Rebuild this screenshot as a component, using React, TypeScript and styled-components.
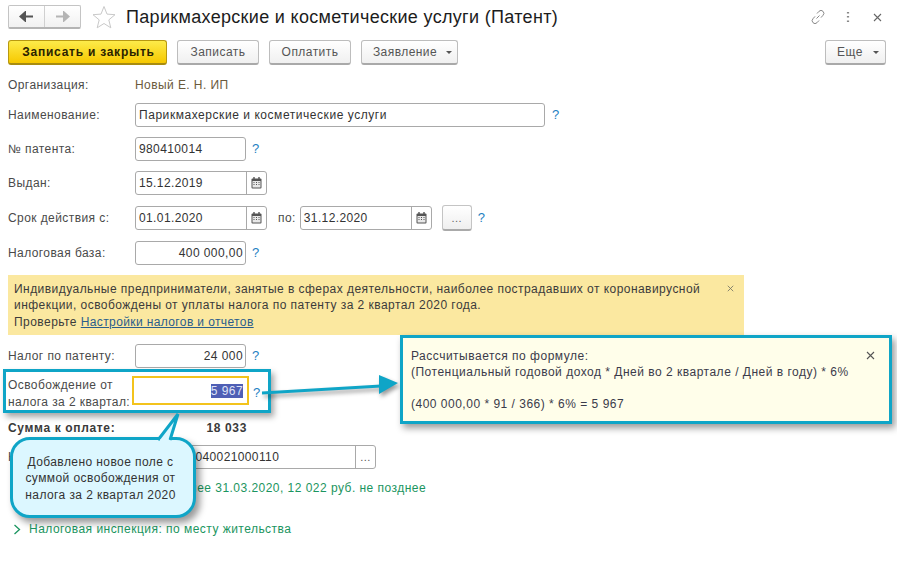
import React from "react";
import styled, { createGlobalStyle } from "styled-components";

const Global = createGlobalStyle`
  html, body { margin: 0; padding: 0; background: #fff; }
  body { font-family: "Liberation Sans", Arial, sans-serif; font-size: 12px; letter-spacing: .42px; color: #4a4a4a; }
`;
const Page = styled.div`
  position: relative; width: 897px; height: 564px; overflow: hidden; background: #fff;
  padding: 5px 11px 0 8px; box-sizing: border-box;
`;
const TitleBar = styled.div`display: flex; align-items: center; height: 24px;`;
const NavGroup = styled.div`
  display: flex; width: 73px; height: 24px; box-sizing: border-box; border: 1px solid #c4c4c4; border-bottom: 2px solid #b4b4b4; border-radius: 2px;
  background: linear-gradient(#fff, #f1f1f1);
`;
const NavCell = styled.div<{ $divider?: boolean }>`
  flex: 1; display: flex; align-items: center; justify-content: center;
  ${(p) => (p.$divider ? "border-right: 1px solid #d0d0d0;" : "")}
`;
const StarWrap = styled.div`margin-left: 11px; width: 24px; height: 24px; flex: none;`;
const Title = styled.h1`
  margin: 0 0 0 10px; font-weight: 400; font-size: 18px; letter-spacing: .32px; color: #1c1c1c; flex: 1; white-space: nowrap; line-height: 24px;
`;
const WinIcons = styled.div`display: flex; align-items: center; gap: 20px; margin-right: 4px;`;
const CloseWrap = styled.span`display: flex; margin-left: 3px;`;
const Toolbar = styled.div`display: flex; align-items: stretch; gap: 10px; height: 25px; margin-top: 11px;`;
const Button = styled.div<{ $w: number; $primary?: boolean; $push?: boolean; $shift?: number; $gap?: number }>`
  width: ${(p) => p.$w}px; box-sizing: border-box; display: flex; align-items: center; justify-content: center; gap: ${(p) => p.$gap ?? 8}px;
  padding-left: ${(p) => p.$shift ?? 0}px;
  border-radius: 3px; border: 1px solid ${(p) => (p.$primary ? "#b8990f" : "#bdbdbd")}; border-bottom-width: 2px;
  border-bottom-color: ${(p) => (p.$primary ? "#a88c10" : "#a9a9a9")};
  background: ${(p) => (p.$primary ? "linear-gradient(#fdeb4a,#f6c800)" : "linear-gradient(#fff,#f0f0f0)")};
  color: ${(p) => (p.$primary ? "#2a2200" : "#555")}; font-weight: ${(p) => (p.$primary ? 700 : 400)};
  letter-spacing: ${(p) => (p.$primary ? ".75px" : ".45px")};
  ${(p) => (p.$push ? "margin-left: auto;" : "")}
`;
const Caret = styled.span`width: 0; height: 0; border: 3px solid transparent; border-top: 3px solid #555; border-bottom: 0;`;
const Row = styled.div<{ $top: number; $h?: number }>`
  display: flex; align-items: center; margin-top: ${(p) => p.$top}px; height: ${(p) => p.$h ?? 24}px;
`;
const Label = styled.div<{ $w?: number; $bold?: boolean; $pad?: number }>`
  width: ${(p) => p.$w ?? 127}px; flex: none; line-height: 16.5px; font-weight: ${(p) => (p.$bold ? 700 : 400)};
  padding-top: ${(p) => p.$pad ?? 0}px;
  ${(p) => (p.$bold ? "color:#3a3a3a; letter-spacing: .65px;" : "")}
`;
const Value = styled.div`color: #6b5a3c;`;
const Field = styled.div<{ $w: number; $right?: boolean; $ls?: number }>`
  width: ${(p) => p.$w}px; height: 24px; box-sizing: border-box; display: flex; align-items: center; flex: none;
  border: 1px solid #a9a9a9; border-radius: 3px; background: #fff; color: #333; padding: 0 3px;
  ${(p) => (p.$right ? "justify-content: flex-end; padding-right: 2px;" : "")}
  ${(p) => (p.$ls ? `letter-spacing: ${p.$ls}px;` : "")}
  overflow: hidden; white-space: nowrap;
`;
const FieldText = styled.span`flex: 1; white-space: nowrap; letter-spacing: .38px;`;
const FieldBtn = styled.span`
  flex: none; width: 20px; height: 24px; margin-right: -3px; border-left: 1px solid #a9a9a9; display: flex; align-items: center; justify-content: center; color: #555; box-sizing: border-box; font-size: 11px;
`;
const Help = styled.span<{ $left?: number; $pad?: number }>`
  margin-left: ${(p) => p.$left ?? 6}px; color: #1e7fc2; font-size: 13px; font-weight: 400; line-height: 16px;
  padding-top: ${(p) => p.$pad ?? 0}px;
`;
const Sub = styled.span`margin: 0 4px 0 11px; `;
const DotsBtn = styled.div`
  width: 30px; height: 26px; margin-left: 10px; box-sizing: border-box; border: 1px solid #c4c4c4; border-bottom: 2px solid #aaa; border-radius: 3px;
  background: linear-gradient(#fff, #efefef); display: flex; align-items: center; justify-content: center; color: #666; font-size: 11px;
`;
const Banner = styled.div`
  position: relative; margin-top: 10px; width: 736px; height: 60px; box-sizing: border-box; background: #fbe8a0; padding: 6px 6px; line-height: 16.4px; color: #3b3b3b; letter-spacing: .45px;
`;
const BannerClose = styled.span`position: absolute; right: 10px; top: 5px; color: #665; font-size: 12px;`;
const BannerLink = styled.span`color: #2a5d8c; text-decoration: underline; letter-spacing: .38px;`;
const YellowField = styled.div`
  width: 117px; height: 29px; box-sizing: border-box; border: 2px solid #f3c31c; margin-left: -3px; display: flex; align-items: center; justify-content: flex-end; padding-right: 4px; flex: none; background: #fff;
`;
const Selected = styled.span`background: #4f5fb5; color: #dfe3f7;`;
const Green = styled.div<{ $top: number; $left?: number }>`
  color: #1b9560; margin-top: ${(p) => p.$top}px; margin-left: ${(p) => p.$left ?? 0}px; white-space: nowrap; display: flex; align-items: center; gap: 8px; height: 16px; letter-spacing: .47px;
`;
const SumValue = styled.div`width: 112px; text-align: right; font-weight: 700; color: #3a3a3a; letter-spacing: .65px;`;

const Highlight = styled.div`
  position: absolute; left: 3px; top: 369px; width: 268px; height: 44px; box-sizing: border-box; border: 3px solid #0fa5c7; box-shadow: 3px 4px 6px rgba(0,0,0,.35); pointer-events: none;
`;
const Tip = styled.div`
  position: absolute; left: 400px; top: 335px; width: 492px; height: 89px; box-sizing: border-box; border: 3px solid #0fa5c7; background: #fffeea; padding: 10px 8px; line-height: 16px; color: #3b3b4a; box-shadow: 3px 4px 7px rgba(0,0,0,.4); letter-spacing: .5px;
`;
const TipClose = styled.span`position: absolute; right: 14px; top: 10px;`;
const TipBlank = styled.div`height: 16px;`;
const Bubble = styled.div`
  position: absolute; left: 10px; top: 437px; width: 186px; height: 81px; box-sizing: border-box; border: 3px solid #0fa5c7; border-radius: 20px; background: #dcf7ff; box-shadow: 4px 5px 7px rgba(0,0,0,.4);
  display: flex; align-items: center; justify-content: center; text-align: center; color: #333; line-height: 16.5px; padding: 2px 5px 0 0; white-space: pre-line;
`;
const Overlay = styled.svg`position: absolute; left: 0; top: 0; pointer-events: none;`;

const X = ({ s = 9, c = "#666" }: { s?: number; c?: string }) => (
  <svg width={s} height={s} viewBox="0 0 9 9"><path d="M1 1l7 7M8 1l-7 7" stroke={c} strokeWidth="1.1" fill="none" /></svg>
);
const Cal = () => (
  <svg width="11" height="12" viewBox="0 0 11 12">
    <rect x="0.5" y="1.5" width="10" height="10" rx="1" fill="#555" />
    <rect x="1.5" y="4" width="8" height="6.5" fill="#e8e8e8" />
    <path d="M3 0v3M8 0v3" stroke="#555" strokeWidth="1.4" />
    <path d="M2.5 5.5h1M5 5.5h1M7.5 5.5h1M2.5 7.5h1M5 7.5h1M7.5 7.5h1" stroke="#555" strokeWidth="1.2" />
  </svg>
);

export default function App() {
  return (
    <Page>
      <Global />
      <TitleBar>
        <NavGroup>
          <NavCell $divider>
            <svg width="15" height="11" viewBox="0 0 15 11"><path d="M14 5.5H5M6 1.5L1.5 5.5 6 9.5z" stroke="#555" strokeWidth="2" fill="#555" /></svg>
          </NavCell>
          <NavCell>
            <svg width="15" height="11" viewBox="0 0 15 11"><path d="M1 5.5h9M9 1.5l4.5 4L9 9.5z" stroke="#b5b5b5" strokeWidth="2" fill="#b5b5b5" /></svg>
          </NavCell>
        </NavGroup>
        <StarWrap>
          <svg width="24" height="24" viewBox="0 0 24 24"><path d="M12 1.5l3 7.6 8 .6-6.2 5.2 2 7.9L12 18.5l-6.8 4.3 2-7.9L1 9.7l8-.6z" fill="#fff" stroke="#c9c9c9" /></svg>
        </StarWrap>
        <Title>Парикмахерские и косметические услуги (Патент)</Title>
        <WinIcons>
          <svg width="16" height="16" viewBox="0 0 16 16" fill="none" stroke="#8a8a8a" strokeWidth="1">
            <path d="M6.5 9.5l3-3M7 4.5l2-2.2a2.6 2.6 0 0 1 4 4L11 8.6M9 11.5l-2 2.2a2.6 2.6 0 0 1-4-4L5 7.4" />
          </svg>
          <svg width="4" height="12" viewBox="0 0 4 12"><path d="M2 1v1.5M2 5v1.5M2 9.5V11" stroke="#888" strokeWidth="2.2" /></svg>
          <CloseWrap><X /></CloseWrap>
        </WinIcons>
      </TitleBar>
      <Toolbar>
        <Button $w={159} $primary $shift={2}>Записать и закрыть</Button>
        <Button $w={82}>Записать</Button>
        <Button $w={82}>Оплатить</Button>
        <Button $w={97} $shift={6} $gap={9}>Заявление <Caret /></Button>
        <Button $w={61} $push $shift={5} $gap={10}>Еще <Caret /></Button>
      </Toolbar>
      <Row $top={12} $h={16}><Label>Организация:</Label><Value>Новый Е. Н. ИП</Value></Row>
      <Row $top={10}><Label>Наименование:</Label><Field $w={410} $ls={0.55}>Парикмахерские и косметические услуги</Field><Help $left={7}>?</Help></Row>
      <Row $top={10}><Label>№ патента:</Label><Field $w={111} $ls={0.38}>980410014</Field><Help>?</Help></Row>
      <Row $top={10}><Label>Выдан:</Label><Field $w={132}><FieldText>15.12.2019</FieldText><FieldBtn><Cal /></FieldBtn></Field></Row>
      <Row $top={11}>
        <Label>Срок действия с:</Label>
        <Field $w={132}><FieldText>01.01.2020</FieldText><FieldBtn><Cal /></FieldBtn></Field>
        <Sub>по:</Sub>
        <Field $w={132}><FieldText>31.12.2020</FieldText><FieldBtn><Cal /></FieldBtn></Field>
        <DotsBtn>...</DotsBtn><Help>?</Help>
      </Row>
      <Row $top={11}><Label>Налоговая база:</Label><Field $w={111} $right>400 000,00</Field><Help>?</Help></Row>
      <Banner>
        Индивидуальные предприниматели, занятые в сферах деятельности, наиболее пострадавших от коронавирусной<br />
        инфекции, освобождены от уплаты налога по патенту за 2 квартал 2020 года.<br />
        Проверьте <BannerLink>Настройки налогов и отчетов</BannerLink>
        <BannerClose><X s={7} c="#776" /></BannerClose>
      </Banner>
      <Row $top={9}><Label>Налог по патенту:</Label><Field $w={111} $right>24 000</Field><Help>?</Help></Row>
      <Row $top={8} $h={29}>
        <Label $pad={6}>Освобождение от<br />налога за 2 квартал:</Label>
        <YellowField><Selected>5 967</Selected></YellowField>
        <Help $left={4} $pad={4}>?</Help>
      </Row>
      <Row $top={15} $h={16}><Label $bold>Сумма к оплате:</Label><SumValue>18 033</SumValue></Row>
      <Row $top={9}>
        <Label>КБК:</Label>
        <Field $w={241}><FieldText>18210504040021000110</FieldText><FieldBtn>...</FieldBtn></Field>
      </Row>
      <Green $top={11} $left={73}>6 011 руб. не позднее 31.03.2020, 12 022 руб. не позднее</Green>
      <Green $top={25} $left={5}>
        <svg width="8" height="11" viewBox="0 0 8 11"><path d="M1.5 1l5 4.5-5 4.5" stroke="#1b9560" strokeWidth="1.3" fill="none" /></svg>
        Налоговая инспекция: по месту жительства
      </Green>

      <Highlight />
      <Overlay width="897" height="564" viewBox="0 0 897 564">
        <g style={{ filter: "drop-shadow(2px 3px 2px rgba(0,0,0,.4))" }}>
          <path d="M262 393L381 386" stroke="#0fa5c7" strokeWidth="3" />
          <path d="M379 375L398 383 379 394z" fill="#0fa5c7" />
        </g>
      </Overlay>
      <Tip>
        Рассчитывается по формуле:<br />
        (Потенциальный годовой доход * Дней во 2 квартале / Дней в году) * 6%
        <TipBlank />
        (400 000,00 * 91 / 366) * 6% = 5 967
        <TipClose><X s={9} c="#555" /></TipClose>
      </Tip>
      <Bubble>{"Добавлено новое поле с\nсуммой освобождения от\nналога за 2 квартал 2020"}</Bubble>
      <Overlay width="897" height="564" viewBox="0 0 897 564">
        <path d="M158 440L178 414 170 440" fill="#dcf7ff" stroke="#0fa5c7" strokeWidth="3" strokeLinejoin="miter" />
        <path d="M160 441h9" stroke="#dcf7ff" strokeWidth="3" />
      </Overlay>
    </Page>
  );
}
